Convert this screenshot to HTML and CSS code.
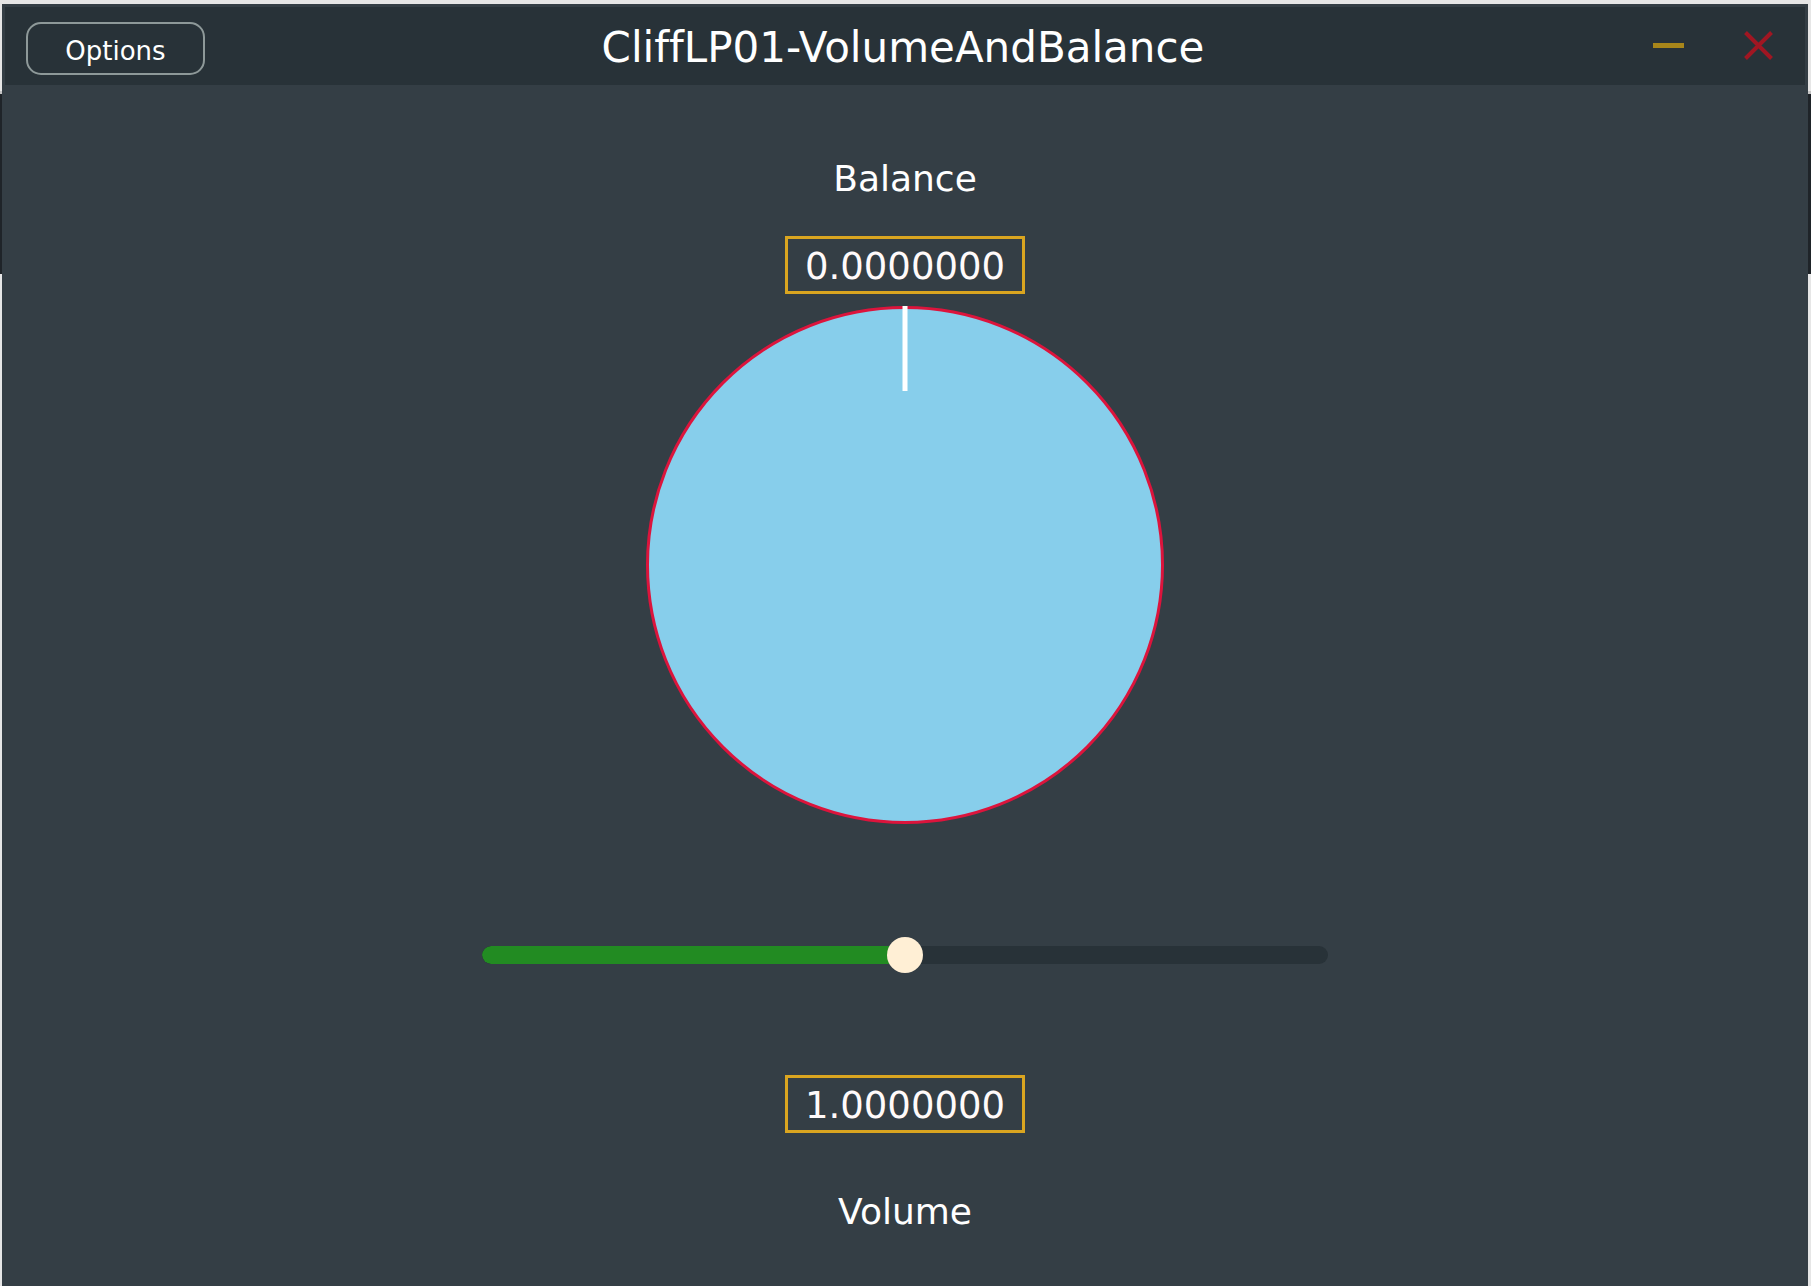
FILE: index.html
```html
<!DOCTYPE html>
<html lang="en">
<head>
<meta charset="utf-8">
<title>CliffLP01-VolumeAndBalance</title>
<link rel="stylesheet" href="styles.css">
</head>
<body>
<div class="window">
  <header class="titlebar">
    <div class="tb-left">
      <button class="options-btn">Options</button>
    </div>
    <div class="title">CliffLP01-VolumeAndBalance</div>
    <div class="tb-right">
      <span class="minimize" aria-label="Minimize"></span>
      <svg class="close" width="29" height="29" viewBox="0 0 29 29" aria-label="Close">
        <path d="M1.5 1.5 L27.5 27.5 M27.5 1.5 L1.5 27.5" stroke="#a01622" stroke-width="4" fill="none"/>
      </svg>
    </div>
  </header>
  <main class="content">
    <div class="label label-balance">Balance</div>
    <div class="value-box value-balance">0.0000000</div>
    <svg class="knob" width="518" height="518" viewBox="0 0 518 518">
      <circle cx="259" cy="259" r="257.5" fill="#87ceeb" stroke="#dc143c" stroke-width="3"/>
      <rect x="256.5" y="0" width="5" height="85" fill="#ffffff"/>
    </svg>
    <div class="slider">
      <div class="track">
        <div class="fill" style="width: 50%"></div>
      </div>
      <div class="thumb"></div>
    </div>
    <div class="value-box value-volume">1.0000000</div>
    <div class="label label-volume">Volume</div>
  </main>
</div>
</body>
</html>
```
FILE: styles.css
```css
html, body {
  margin: 0;
  padding: 0;
}

body {
  width: 1811px;
  height: 1286px;
  overflow: hidden;
  font-family: "DejaVu Sans", Verdana, sans-serif;
  font-variant-ligatures: none;
  background: linear-gradient(to bottom,
    #e6e6e6 0, #e6e6e6 91px,
    #c4c4c4 91px, #c4c4c4 94px,
    #1f2429 94px, #1f2429 274px,
    #e6e6e6 274px, #e6e6e6 100%);
}

.window {
  box-sizing: border-box;
  margin: 4px 3px 0 2px;
  width: 1806px;
  height: 1282px;
  background: #343e45;
  padding: 3px 3px 0 3px;
  display: flex;
  flex-direction: column;
}

.titlebar {
  height: 78px;
  flex: 0 0 78px;
  background: #283238;
  display: grid;
  grid-template-columns: 1fr auto 1fr;
  align-items: center;
}

.tb-left {
  display: flex;
  align-self: start;
  padding: 15px 0 0 21px;
}

.options-btn {
  box-sizing: border-box;
  width: 179px;
  height: 53px;
  border: 2px solid #8e9999;
  border-radius: 15px;
  background: transparent;
  color: #ffffff;
  font-family: "DejaVu Sans", Verdana, sans-serif;
  font-variant-ligatures: none;
  font-size: 26px;
  line-height: 30px;
  padding: 4px 0 0 0;
  cursor: pointer;
}

.title {
  color: #ffffff;
  font-size: 42px;
  line-height: 48px;
  margin-top: 4px;
  margin-left: -4px;
  white-space: nowrap;
}

.tb-right {
  display: flex;
  justify-content: flex-end;
  align-items: center;
  gap: 60px;
  padding-right: 32px;
  margin-top: -2px;
}

.minimize {
  display: block;
  width: 31px;
  height: 5px;
  background: #a8861a;
}

.close {
  display: block;
}

.content {
  flex: 1;
  display: flex;
  flex-direction: column;
  align-items: center;
  color: #ffffff;
}

.label {
  font-size: 36px;
  line-height: 42px;
  color: #ffffff;
}

.label-balance {
  margin-top: 73px;
}

.value-box {
  box-sizing: border-box;
  width: 240px;
  height: 58px;
  border: 3px solid #daa520;
  padding: 7px 0 3px 0;
  font-size: 37px;
  line-height: 42px;
  text-align: center;
  color: #fffafa;
}

.value-balance {
  margin-top: 36px;
}

.knob {
  display: block;
  margin-top: 12px;
}

.slider {
  position: relative;
  margin-top: 113px;
  width: 846px;
  height: 36px;
  display: flex;
  align-items: center;
}

.track {
  width: 100%;
  height: 18px;
  border-radius: 9px;
  background: #283238;
  overflow: hidden;
}

.fill {
  height: 100%;
  background: #228b22;
  border-radius: 9px 0 0 9px;
}

.thumb {
  position: absolute;
  left: 50%;
  top: 0;
  width: 36px;
  height: 36px;
  margin-left: -18px;
  border-radius: 50%;
  background: #ffefd5;
}

.value-volume {
  margin-top: 102px;
}

.label-volume {
  margin-top: 58px;
}
```
